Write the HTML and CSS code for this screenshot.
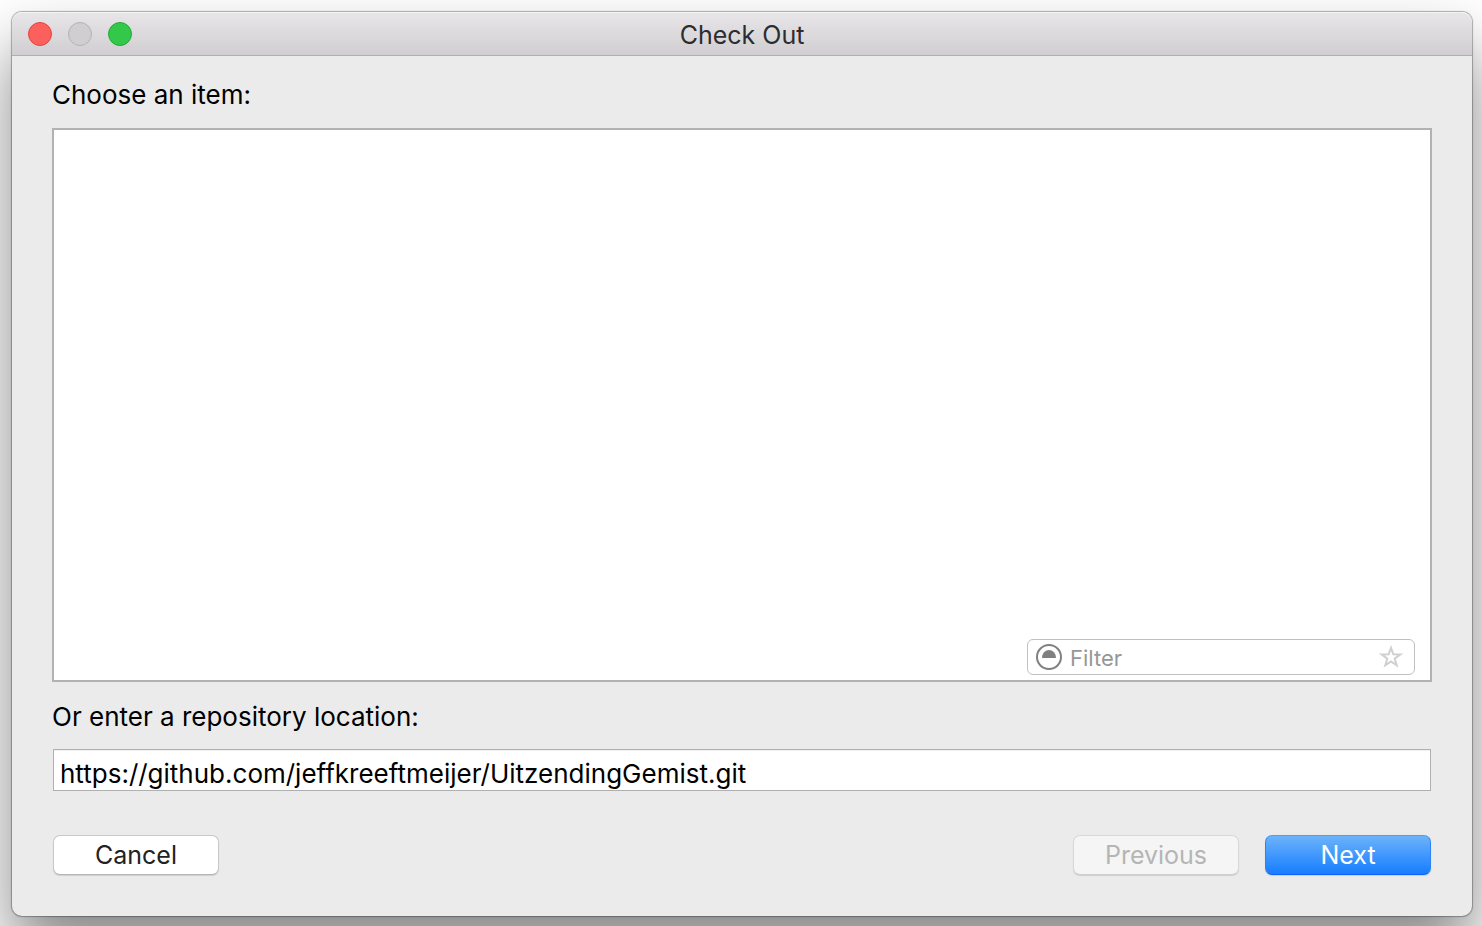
FILE: index.html
```html
<!DOCTYPE html>
<html lang="en">
<head>
<meta charset="utf-8">
<title>Check Out</title>
<link rel="stylesheet" href="styles.css">
</head>
<body>
<main class="window">
  <header class="titlebar">
    <div class="lights">
      <button class="light light-close" type="button" aria-label="Close"></button>
      <button class="light light-minimize" type="button" aria-label="Minimize" disabled></button>
      <button class="light light-zoom" type="button" aria-label="Zoom"></button>
    </div>
    <h1 class="title">Check Out</h1>
  </header>
  <form class="content">
    <h2 class="label" id="items-label">Choose an item:</h2>
    <section class="items" aria-labelledby="items-label">
      <div class="filter">
        <svg class="filter-icon" viewBox="0 0 28 28" aria-hidden="true">
          <circle cx="14" cy="14" r="12" fill="none" stroke="#808080" stroke-width="2"/>
          <path d="M7 15a7 8 0 0 1 14 0z" fill="#808080"/>
        </svg>
        <input class="filter-input" type="text" placeholder="Filter" aria-label="Filter">
        <button class="star" type="button" aria-label="Show favorites">
          <svg class="star-icon" viewBox="0 0 24 24" aria-hidden="true">
            <path d="M12 2.8l2.3 6.5 7 .1-5.6 4.2 2 6.8-5.7-4-5.7 4 2-6.8-5.6-4.2 7-.1z" fill="none" stroke="#d0d0d0" stroke-width="2"/>
          </svg>
        </button>
      </div>
    </section>
    <label class="label" for="location">Or enter a repository location:</label>
    <input class="location" id="location" type="text" value="https://github.com/jeffkreeftmeijer/UitzendingGemist.git" spellcheck="false">
    <footer class="actions">
      <button class="button" type="button">Cancel</button>
      <div class="steps">
        <button class="button" type="button" disabled>Previous</button>
        <button class="button button-primary" type="submit">Next</button>
      </div>
    </footer>
  </form>
</main>
</body>
</html>
```
FILE: styles.css
```css
* {
  box-sizing: border-box;
}

body {
  display: flex;
  min-height: 100vh;
  margin: 0;
  padding: 12px 10px 10px 12px;
  overflow: hidden;
  background: #fff;
  color: #000;
  font-family: Inter, "Liberation Sans", sans-serif;
  font-size: 26px;
  line-height: 32px;
}

button,
input {
  margin: 0;
  font: inherit;
}

.window {
  display: flex;
  flex: 1;
  flex-direction: column;
  border-radius: 10px;
  background: #ebebeb;
  box-shadow: 0 0 1px 1px rgba(0, 0, 0, 0.3), 0 36px 64px rgba(0, 0, 0, 0.48);
}

.titlebar {
  display: grid;
  grid-template-columns: 1fr auto 1fr;
  align-items: center;
  height: 44px;
  padding: 0 16px;
  border-bottom: 1px solid #b0aeb0;
  border-radius: 10px 10px 0 0;
  background: linear-gradient(#e8e6e8, #d1ced1);
  box-shadow: inset 0 1px #f5f4f5;
}

.lights {
  display: flex;
  gap: 16px;
}

.light {
  width: 24px;
  height: 24px;
  padding: 0;
  border: 1px solid;
  border-radius: 50%;
}

.light-close {
  border-color: #e2463f;
  background: #fc605c;
}

.light-minimize {
  border-color: #b4b3b4;
  background: #d0cfd0;
}

.light-zoom {
  border-color: #24aa35;
  background: #34c84a;
}

.title {
  margin: 0;
  padding-top: 2px;
  color: #2e2c2e;
  font-size: 25px;
  font-weight: 400;
}

.content {
  display: flex;
  flex: 1;
  flex-direction: column;
  padding: 23px 40px 41px;
}

.label {
  margin: 0;
  font-size: 26px;
  font-weight: 400;
}

.items {
  display: flex;
  flex: 1;
  align-items: flex-end;
  justify-content: flex-end;
  margin: 17px 0 19px;
  padding: 5px 15px;
  border: 2px solid #b2b2b2;
  background: #fff;
}

.filter {
  display: flex;
  align-items: center;
  width: 388px;
  height: 36px;
  padding: 0 11px 0 7px;
  border: 1px solid #c0c0c0;
  border-radius: 6px;
}

.filter-icon {
  width: 28px;
  height: 28px;
}

.filter-input {
  flex: 1;
  min-width: 0;
  padding: 2px 7px 0;
  border: 0;
  outline: 0;
  background: transparent;
  font-size: 22px;
  line-height: 28px;
}

.filter-input::placeholder {
  color: #979797;
}

.star {
  display: flex;
  padding: 0;
  border: 0;
  background: transparent;
}

.star-icon {
  width: 24px;
  height: 24px;
}

.location {
  height: 42px;
  margin: 16px 1px 44px;
  padding: 6px 6px 0;
  border: 1px solid #b0b0b0;
  outline: 0;
  background: #fff;
  box-shadow: inset 0 1px #f0f0f0;
  color: #000;
}

.actions {
  display: flex;
  justify-content: space-between;
  padding: 0 1px;
}

.steps {
  display: flex;
  gap: 26px;
}

.button {
  width: 166px;
  height: 40px;
  padding: 0;
  border: 1px solid #c8c8c8;
  border-bottom-color: #b5b5b5;
  border-radius: 7px;
  background: #fff;
  box-shadow: 0 1px 1px rgba(0, 0, 0, 0.12);
  color: #222;
  font-size: 25px;
}

.button:disabled {
  border-color: #d8d8d8;
  border-bottom-color: #cecece;
  background: #f5f5f5;
  color: #b5b5b5;
}

.button-primary {
  border-color: #4c9eee #2d85f5 #0f62fb;
  background: linear-gradient(#6cb3fa, #167dff);
  color: #fff;
}
```
